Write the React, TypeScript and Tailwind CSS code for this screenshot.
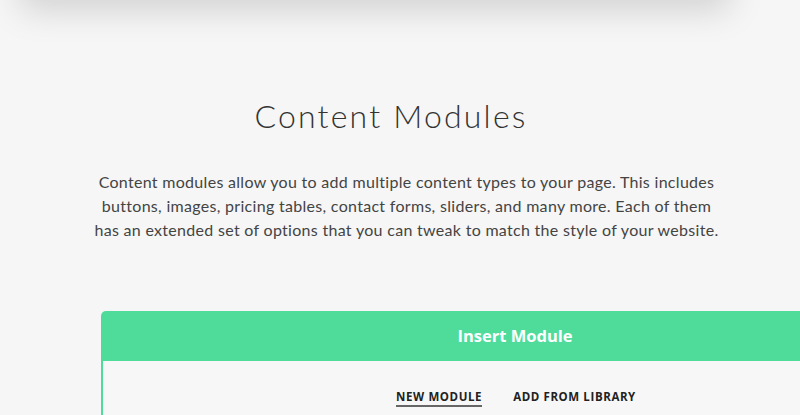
export default function App() {
  return (
    <div className="h-[415px] w-full overflow-hidden bg-[#f6f6f6]">
      {/* card sitting above the fold, only its shadow shows */}
      <div className="mx-[20px] -mt-[60px] h-[60px] w-[710px] bg-[#f6f6f6] shadow-[0_10px_35px_rgba(0,0,0,0.15)]" />

      <section className="pt-[96px] text-center">
        <h1 className="pr-[18px] font-['Lato',sans-serif] text-[32px] font-light leading-[40px] tracking-[2.2px] text-[#333]">
          Content Modules
        </h1>
        <p className="mx-auto mt-[34px] pl-[13px] font-['Lato',sans-serif] text-[16px] leading-[24px] tracking-[0.3px] text-[#444]">
          Content modules allow you to add multiple content types to your page. This includes
          <br />
          buttons, images, pricing tables, contact forms, sliders, and many more. Each of them
          <br />
          has an extended set of options that you can tweak to match the style of your website.
        </p>
      </section>

      <div className="ml-[101px] mt-[69px] w-[828px]">
        <div className="flex h-[50px] items-center justify-center rounded-tl-[5px] bg-[#4fdc9b]">
          <span className="font-['Open_Sans',sans-serif] text-[16.5px] font-bold text-white">Insert Module</span>
        </div>
        <div className="h-[55px] border-l-2 border-[#4fdc9b] bg-[#f7f7f7]">
          <div className="flex justify-center gap-[31px] pt-[29px] font-['Open_Sans',sans-serif] text-[11.5px] font-bold tracking-[0.6px] text-[#222]">
            <span className="border-b-2 border-[#666] pb-[1px] leading-[14px]">NEW MODULE</span>
            <span className="leading-[14px]">ADD FROM LIBRARY</span>
          </div>
        </div>
      </div>
    </div>
  );
}
